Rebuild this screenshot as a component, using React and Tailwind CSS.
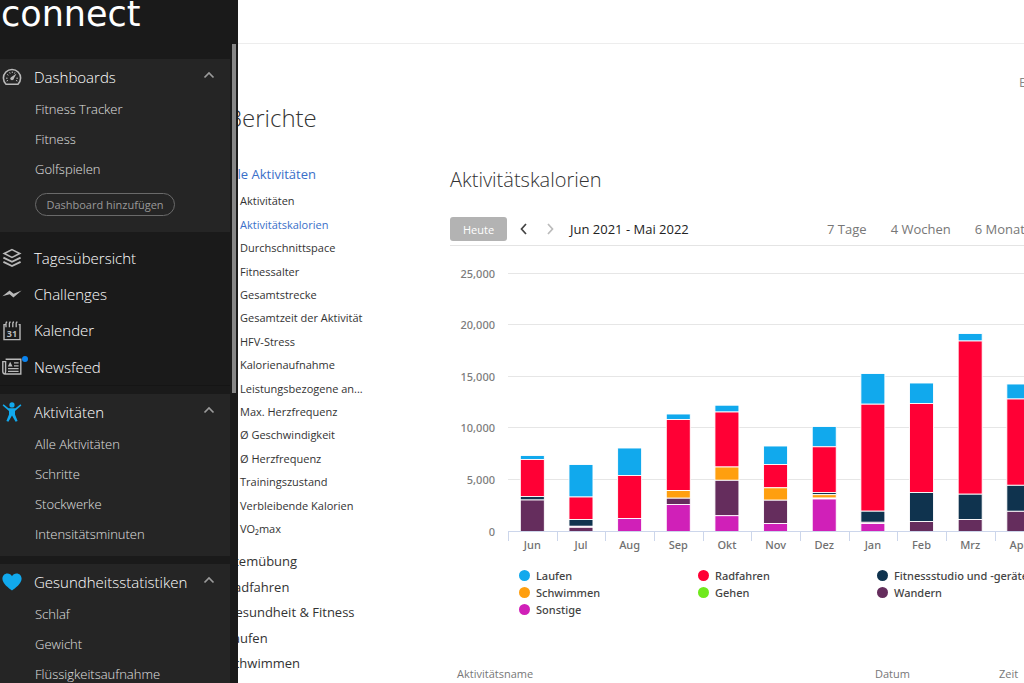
import React from "react";

const COLORS = {
  run: "#11a9ed",
  ride: "#ff0035",
  gym: "#0f334e",
  swim: "#ff9f0f",
  walk: "#6fe91c",
  hike: "#652d5d",
  other: "#d020b8",
};

// Heights above the zero line, listed from the top segment down.
const MONTHS = [
  { name: "Jun", stack: [["run", 76], ["ride", 72], ["gym", 35], ["hike", 31.5]] },
  { name: "Jul", stack: [["run", 67], ["ride", 34.5], ["gym", 12], ["other", 5.2], ["hike", 4.2]] },
  { name: "Aug", stack: [["run", 83.5], ["ride", 56], ["other", 13]] },
  { name: "Sep", stack: [["run", 117.5], ["ride", 112], ["swim", 41], ["hike", 33.3], ["other", 27]] },
  { name: "Okt", stack: [["run", 126.3], ["ride", 119.5], ["swim", 64.5], ["hike", 51.2], ["other", 15.8]] },
  { name: "Nov", stack: [["run", 85.5], ["ride", 67], ["swim", 43.7], ["hike", 31.3], ["other", 8]] },
  { name: "Dez", stack: [["run", 105], ["ride", 84.7], ["gym", 39], ["swim", 36.8], ["walk", 33.4], ["other", 32.5]] },
  { name: "Jan", stack: [["run", 158], ["ride", 127.3], ["gym", 20.3], ["hike", 9.2], ["other", 8]] },
  { name: "Feb", stack: [["run", 148.5], ["ride", 128], ["gym", 39], ["hike", 10]] },
  { name: "Mrz", stack: [["run", 198], ["ride", 190.5], ["gym", 37.3], ["hike", 12]] },
  { name: "Apr", stack: [["run", 147.5], ["ride", 132.5], ["gym", 46.2], ["hike", 20.2]] },
];

const AXIS = ["0", "5,000", "10,000", "15,000", "20,000", "25,000"];

function Chart() {
  const base = 269.5;
  const step = 48.65;
  return (
    <svg
      width="650"
      height="296"
      viewBox="0 0 650 296"
      className="block font-['Noto_Sans',sans-serif] text-[11px] font-medium"
      role="img"
      aria-label="Aktivitätskalorien"
    >
      {AXIS.map((label, i) => {
        const y = Math.round(base - i * 51.6) - 0.5;
        return (
          <g key={label}>
            <line x1="58" x2="642" y1={y} y2={y} stroke={i ? "#e6e6e6" : "#ccd6eb"} />
            <text x="45" y={y + 4} textAnchor="end" fill="#7c7c7c">{label}</text>
          </g>
        );
      })}
      {Array.from({ length: 13 }, (_, i) => {
        const x = Math.round(58 + i * step) + 0.5;
        return <line key={i} x1={x} x2={x} y1="269" y2="279" stroke="#ccd6eb" />;
      })}
      {MONTHS.map((m, i) => {
        const cx = 58 + step * (i + 0.5);
        return (
          <g key={m.name}>
            {m.stack.map(([kind, top], j) => {
              const bottom = m.stack[j + 1] ? m.stack[j + 1][1] : 0;
              return (
                <rect
                  key={kind}
                  x={cx - 12}
                  y={base - top}
                  width="24"
                  height={top - bottom}
                  fill={COLORS[kind]}
                  stroke="#fff"
                  strokeWidth="0.9"
                />
              );
            })}
            <text x={cx} y="287" textAnchor="middle" fill="#707070">{m.name}</text>
          </g>
        );
      })}
      <line x1="58" x2="642" y1="269.5" y2="269.5" stroke="#ccd6eb" />
    </svg>
  );
}

const Gauge = () => (
  <svg width="20" height="18" viewBox="0 0 20 18" fill="none" stroke="#b9b9b9">
    <path d="M4 16.2A8.6 8.6 0 1 1 16 16.2Z" strokeWidth="1.6" strokeLinejoin="round" />
    <path d="M4 10.2h1.6M5.2 6.4l1.2.9M7.6 4.3l.6 1.3M10.3 3.6V5M13 4.4l-.5 1.2M16 10.2h-1.6M4.6 13l1.4-.6M15.4 13l-1.4-.6" strokeWidth="1" />
    <path d="M9 9.3 14.6 5.6 11.3 11.4Z" fill="#b9b9b9" stroke="none" />
    <circle cx="10" cy="10.6" r="1.7" fill="#b9b9b9" stroke="none" />
  </svg>
);

const Layers = () => (
  <svg width="20" height="20" viewBox="0 0 20 20" fill="none" stroke="#b9b9b9" strokeWidth="1.6">
    <path d="M10 1.6 17.8 5.5 10 9.4 2.2 5.5Z" />
    <path d="M1.4 9.6 10 13.8l8.6-4.2M1.4 13.8 10 18l8.6-4.2" strokeWidth="1.9" />
  </svg>
);

const Bolt = () => (
  <svg width="20" height="12" viewBox="0 0 20 12" fill="#b9b9b9">
    <path d="M.4 8.2 7.6 2.6 11.6 5.8 19.6 2.4 11.4 9.6 7.6 6.2Z" />
  </svg>
);

const CalendarIcon = () => (
  <svg width="20" height="20" viewBox="0 0 20 20" fill="none" stroke="#b9b9b9" strokeWidth="1.4">
    <path d="M4 3.6H2V18.6H18V3.6H16.6" />
    <path d="M4 6.2V2.2q0-1 1.2-1.2M7.4 6.2V2.2q0-1 1.2-1.2M10.8 6.2V2.2q0-1 1.2-1.2M14.2 6.2V2.2q0-1 1.2-1.2" strokeWidth="1.3" />
    <text x="10" y="15.6" textAnchor="middle" fontSize="9" fontWeight="700" fill="#b9b9b9" stroke="none">31</text>
  </svg>
);

const News = () => (
  <svg width="20" height="18" viewBox="0 0 20 18" fill="none" stroke="#b9b9b9" strokeWidth="1.4">
    <path d="M3.6 1.2H18.8V16H3Q.8 16 .8 13.6V3.6H3.6V13.6Q3.6 15.6 2.6 15.8" />
    <path d="M12 4.8H16.6M12 7.8H16.6M6 10.6H16.6M6 13.3H16.6" strokeWidth="1.2" />
    <path d="M5.8 8.4 8.2 3.8 10.6 8.4Z" fill="#b9b9b9" stroke="none" />
  </svg>
);

const Person = () => (
  <svg width="20" height="20" viewBox="0 0 20 20" fill="#11a9ed">
    <circle cx="10" cy="2.9" r="2.6" />
    <path d="M1.6 2.2 6.5 6.2H13.5L18.4 2.2 19.4 3.6 13 9V12.4L15.6 19 13.6 19.8 10 13.6 6.4 19.8 4.4 19 7 12.4V9L.6 3.6Z" />
  </svg>
);

const Heart = () => (
  <svg width="20" height="18" viewBox="0 0 20 18" fill="#11a9ed">
    <path d="M10 17.600C7 15.200.4 10.800.4 5.800.4 2.600 2.600.4 5.400.4 7.400.4 9.100 1.400 10 3.200 10.900 1.400 12.600.4 14.600.4c2.800 0 5 2.200 5 5.400 0 5-6.600 9.400-9.600 11.800Z" />
  </svg>
);

const Chevron = ({ className, d }) => (
  <svg width="12" height="12" viewBox="0 0 12 12" fill="none" stroke="currentColor" strokeWidth="1.7" className={className}>
    <path d={d} />
  </svg>
);

function Section({ icon, title, items, className, children }) {
  return (
    <section className={"bg-[#252525] pt-px pr-[15px] pl-[2px] " + className}>
      <button type="button" className="flex h-[34px] w-full items-center text-left text-[15px] font-light text-white">
        <span className="flex w-8 shrink-0">{icon}</span>
        <span className="grow">{title}</span>
        <Chevron className="mb-1 text-[#9b9b9b]" d="M1.500 8.500 6 4l4.500 4.500" />
      </button>
      <ul className="pl-[33px]">
        {items.map((t) => (
          <li key={t}>
            <a href="#" className="block h-[30px] text-[13px] leading-[30px] font-light whitespace-nowrap text-[#e0e0e0]">{t}</a>
          </li>
        ))}
      </ul>
      {children}
    </section>
  );
}

function Sidebar() {
  const links = [
    [<Layers />, "Tagesübersicht"],
    [<Bolt />, "Challenges"],
    [<CalendarIcon />, "Kalender"],
    [<News />, "Newsfeed", true],
  ];
  return (
    <aside className="relative z-10 flex h-screen w-[238px] shrink-0 flex-col overflow-hidden bg-[#1a1a1a]">
      <div className="h-[44px] shrink-0 pl-px font-['DejaVu_Sans',sans-serif] text-[35px] leading-[28px] text-white">
        connect
      </div>
      <div className="flex min-h-0 grow">
        <nav className="min-w-0 grow overflow-hidden pt-[15px]">
          <Section
            icon={<Gauge />}
            title="Dashboards"
            items={["Fitness Tracker", "Fitness", "Golfspielen"]}
            className="h-[173px]"
          >
            <button type="button" className="mt-[9px] ml-[33px] h-[23px] w-[140px] rounded-full border border-[#6a6a6a] text-[11px] leading-none text-[#999]">
              Dashboard hinzufügen
            </button>
          </Section>
          <ul className="my-2 grid h-[146px] auto-rows-fr border-b border-[#151515]">
            {links.map(([icon, label, dot]) => (
              <li key={label}>
                <a href="#" className="flex h-full items-center pl-[2px] text-[15px] font-light text-white">
                  <span className="relative flex w-8 shrink-0">
                    {icon}
                    {dot && <span className="absolute -top-[2px] left-[20px] size-[6px] rounded-full bg-[#0a84f0]" />}
                  </span>
                  {label}
                </a>
              </li>
            ))}
          </ul>
          <Section
            icon={<Person />}
            title="Aktivitäten"
            items={["Alle Aktivitäten", "Schritte", "Stockwerke", "Intensitätsminuten"]}
            className="mb-2 h-[162px]"
          />
          <Section
            icon={<Heart />}
            title="Gesundheitsstatistiken"
            items={["Schlaf", "Gewicht", "Flüssigkeitsaufnahme"]}
            className="h-[180px]"
          />
        </nav>
        <div className="w-2 shrink-0 px-[2px]">
          <div className="h-[349px] bg-[#868686]" />
        </div>
      </div>
    </aside>
  );
}

const REPORTS = [
  "Aktivitäten", "Aktivitätskalorien", "Durchschnittspace", "Fitnessalter", "Gesamtstrecke",
  "Gesamtzeit der Aktivität", "HFV-Stress", "Kalorienaufnahme", "Leistungsbezogene an...",
  "Max. Herzfrequenz", "Ø Geschwindigkeit", "Ø Herzfrequenz", "Trainingszustand",
  "Verbleibende Kalorien", "VO₂max",
];

const CATEGORIES = ["Atemübung", "Radfahren", "Gesundheit & Fitness", "Laufen", "Schwimmen"];

const LEGEND = [
  ["Laufen", "bg-[#11a9ed]"],
  ["Radfahren", "bg-[#ff0035]"],
  ["Fitnessstudio und -geräte", "bg-[#0f334e]"],
  ["Schwimmen", "bg-[#ff9f0f]"],
  ["Gehen", "bg-[#6fe91c]"],
  ["Wandern", "bg-[#652d5d]"],
  ["Sonstige", "bg-[#d020b8]"],
];

export default function App() {
  return (
    <div className="flex h-screen overflow-hidden bg-white font-['Open_Sans',sans-serif] text-[#333]">
      <Sidebar />
      <main className="-ml-3 min-w-0 grow overflow-hidden">
        <header className="h-11 border-b border-[#ededed]" />
        <div className="flex h-[60px] justify-end pt-7">
          <a href="#" className="w-[5px] text-[13px] leading-5 whitespace-nowrap text-[#888]">Exportieren</a>
        </div>
        <div className="flex">
          <div className="w-[224px] shrink-0">
            <h1 className="h-[54px] pl-px text-2xl leading-[28px] font-light">Berichte</h1>
            <a href="#" className="block h-8 text-[13px] leading-[33px] text-[#3a6fc9]">Alle Aktivitäten</a>
            <ul className="grid h-[351px] auto-rows-fr pl-[14px]">
              {REPORTS.map((r) => (
                <li key={r} className="flex items-center text-[11px]">
                  <a href="#" className={r === "Aktivitätskalorien" ? "text-[#3a6fc9]" : "text-[#333]"}>{r}</a>
                </li>
              ))}
            </ul>
            <ul className="mt-2 grid h-[128px] auto-rows-fr">
              {CATEGORIES.map((c) => (
                <li key={c} className="flex items-center">
                  <a href="#" className="text-[13px]">{c}</a>
                </li>
              ))}
            </ul>
          </div>
          <div className="w-[650px] shrink-0 pt-[60px]">
            <h2 className="h-[53px] text-[20px] leading-[32px] font-light">Aktivitätskalorien</h2>
            <div className="flex h-[29px] items-start border-b border-[#e4e4e4]">
              <button type="button" className="h-6 w-[57px] rounded-[3px] bg-[#b3b3b3] text-[11px] leading-none text-white">Heute</button>
              <button type="button" aria-label="Zurück" className="ml-[11px] flex h-6 items-center text-[#444]">
                <Chevron d="M8 1 3.500 6 8 11" />
              </button>
              <button type="button" aria-label="Weiter" className="ml-[14px] flex h-6 items-center text-[#bbb]">
                <Chevron d="M4 1 8.500 6 4 11" />
              </button>
              <span className="ml-[14px] text-[13px] leading-6 text-[#222]">Jun 2021 - Mai 2022</span>
              <div className="ml-auto flex gap-6 pr-[9px] text-[13px] leading-6 text-[#777]">
                <button type="button">7 Tage</button>
                <button type="button">4 Wochen</button>
                <button type="button">6 Monate</button>
                <button type="button">1 Jahr</button>
              </div>
            </div>
            <div className="pt-4">
              <Chart />
            </div>
            <ul className="mt-[9px] grid grid-cols-[179px_179px_179px] pl-[69px] font-['Noto_Sans',sans-serif] text-[11px] leading-[17px] font-medium text-[#444]">
              {LEGEND.map(([label, color]) => (
                <li key={label} className="flex items-center gap-[6px] whitespace-nowrap">
                  <span className={"size-[11px] rounded-full " + color} />
                  {label}
                </li>
              ))}
            </ul>
            <table className="mt-12 w-full table-fixed text-left text-[11px] text-[#777]">
              <thead>
                <tr>
                  <th className="w-[425px] pl-[7px] font-normal">Aktivitätsname</th>
                  <th className="w-[124px] font-normal">Datum</th>
                  <th className="font-normal">Zeit</th>
                </tr>
              </thead>
            </table>
          </div>
        </div>
      </main>
    </div>
  );
}
